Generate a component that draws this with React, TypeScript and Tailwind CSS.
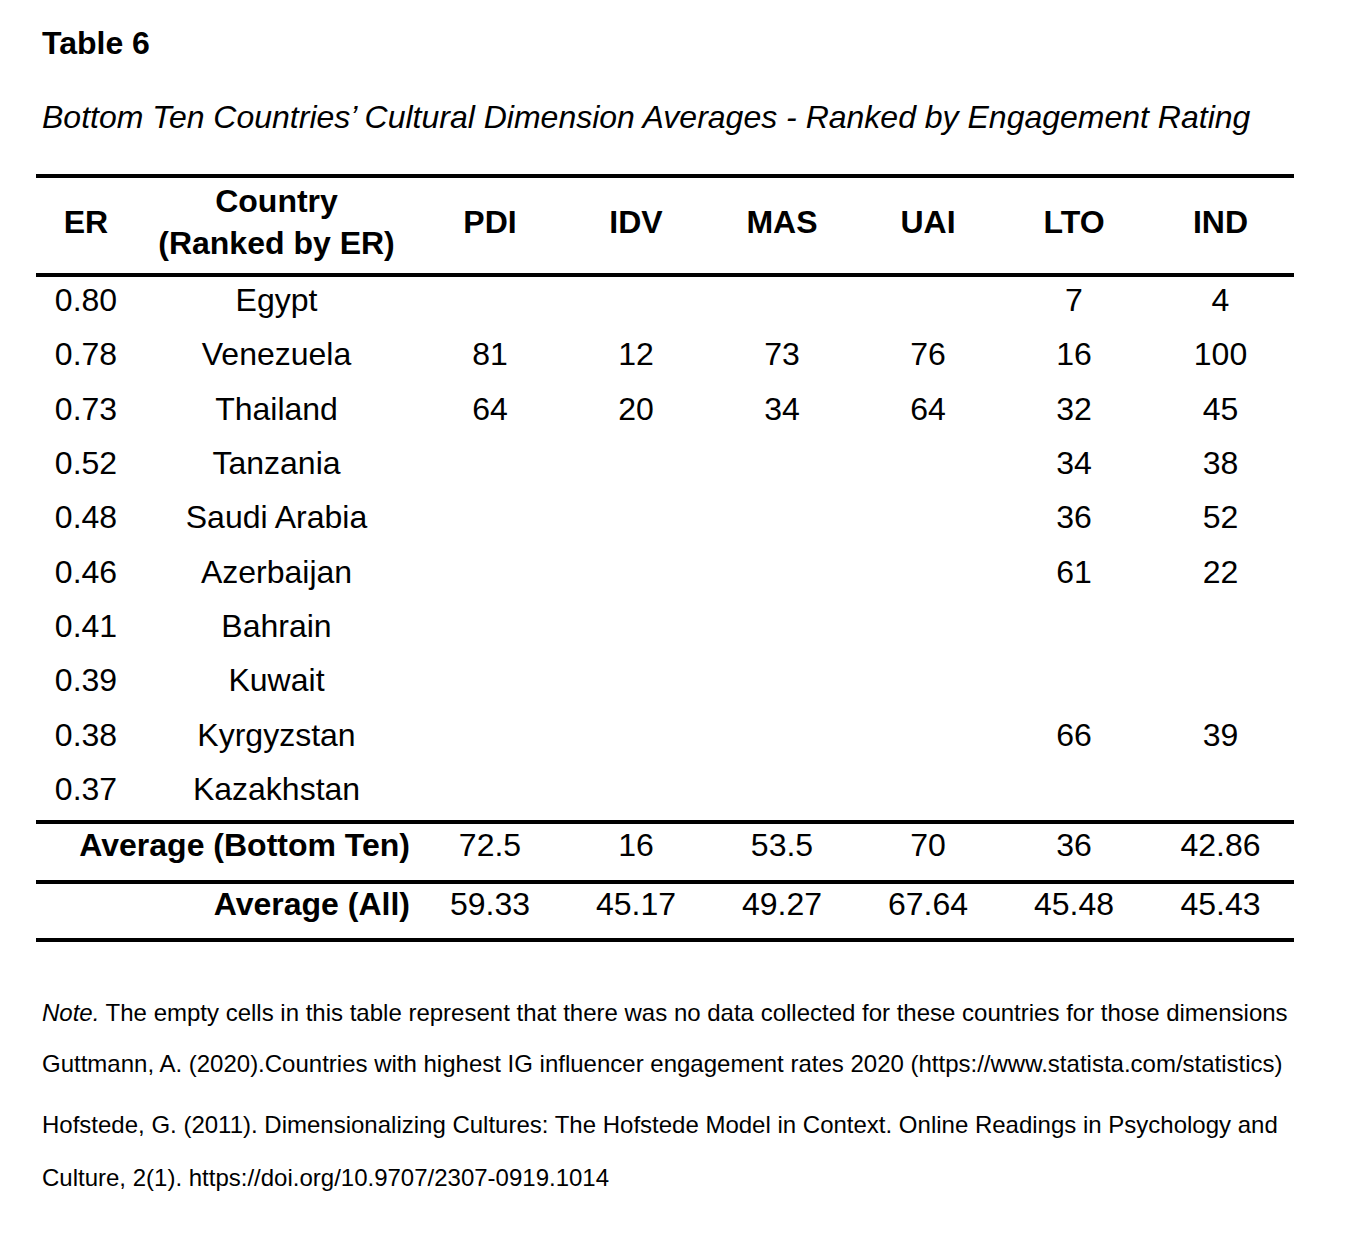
const cols = ['PDI', 'IDV', 'MAS', 'UAI', 'LTO', 'IND'];

type Row = { er: string; country: string; vals: string[] };

const rows: Row[] = [
  { er: '0.80', country: 'Egypt', vals: ['', '', '', '', '7', '4'] },
  { er: '0.78', country: 'Venezuela', vals: ['81', '12', '73', '76', '16', '100'] },
  { er: '0.73', country: 'Thailand', vals: ['64', '20', '34', '64', '32', '45'] },
  { er: '0.52', country: 'Tanzania', vals: ['', '', '', '', '34', '38'] },
  { er: '0.48', country: 'Saudi Arabia', vals: ['', '', '', '', '36', '52'] },
  { er: '0.46', country: 'Azerbaijan', vals: ['', '', '', '', '61', '22'] },
  { er: '0.41', country: 'Bahrain', vals: ['', '', '', '', '', ''] },
  { er: '0.39', country: 'Kuwait', vals: ['', '', '', '', '', ''] },
  { er: '0.38', country: 'Kyrgyzstan', vals: ['', '', '', '', '66', '39'] },
  { er: '0.37', country: 'Kazakhstan', vals: ['', '', '', '', '', ''] },
];

const grid = 'grid grid-cols-[100px_281px_146px_146px_146px_146px_146px_147px]';

const Rule = () => <div className="h-[4px] bg-black" />;

export default function App() {
  return (
    <div
      className="min-h-[1242px] w-[1346px] bg-white px-[36px] text-black"
      style={{ fontFamily: '"Liberation Sans", Arial, sans-serif' }}
    >
      <div className="pl-[6px] pt-[26px] text-[32px] font-bold leading-[34px]">Table 6</div>
      <div className="mt-[37px] pl-[6px] text-[32px] italic leading-[40px]">
        Bottom Ten Countries’ Cultural Dimension Averages - Ranked by Engagement Rating
      </div>

      <div className="mt-[37px] w-[1258px]">
        <Rule />
        <div className={`${grid} h-[95px] items-center pb-[8px] text-[32px] font-bold`}>
          <div className="text-center">ER</div>
          <div className="text-center leading-[42px]">
            Country
            <br />
            (Ranked by ER)
          </div>
          {cols.map((c) => (
            <div key={c} className="text-center">
              {c}
            </div>
          ))}
        </div>
        <Rule />

        {rows.map((r) => (
          <div key={r.er} className={`${grid} h-[54.33px] text-[32px] leading-[46px]`}>
            <div className="text-center">{r.er}</div>
            <div className="text-center">{r.country}</div>
            {r.vals.map((v, i) => (
              <div key={i} className="text-center">
                {v}
              </div>
            ))}
          </div>
        ))}

        <Rule />
        <div className={`${grid} h-[56px] text-[32px] leading-[43px]`}>
          <div className="col-span-2 pr-[7px] text-right font-bold">Average (Bottom Ten)</div>
          {['72.5', '16', '53.5', '70', '36', '42.86'].map((v, i) => (
            <div key={i} className="text-center">
              {v}
            </div>
          ))}
        </div>
        <Rule />
        <div className={`${grid} h-[54px] text-[32px] leading-[40px]`}>
          <div className="col-span-2 pr-[7px] text-right font-bold">Average (All)</div>
          {['59.33', '45.17', '49.27', '67.64', '45.48', '45.43'].map((v, i) => (
            <div key={i} className="text-center">
              {v}
            </div>
          ))}
        </div>
        <Rule />
      </div>

      <div className="mt-[44px] pl-[6px] text-[24px] leading-[53px]">
        <p>
          <span className="italic">Note.</span> The empty cells in this table represent that there was no data
          collected for these countries for those dimensions
        </p>
        <p className="-mt-[2px]">
          Guttmann, A. (2020).Countries with highest IG influencer engagement rates 2020
          (https://www.statista.com/statistics)
        </p>
        <p className="mt-[8px]">
          Hofstede, G. (2011). Dimensionalizing Cultures: The Hofstede Model in Context. Online Readings in
          Psychology and
          <br />
          Culture, 2(1). https://doi.org/10.9707/2307-0919.1014
        </p>
      </div>
    </div>
  );
}
